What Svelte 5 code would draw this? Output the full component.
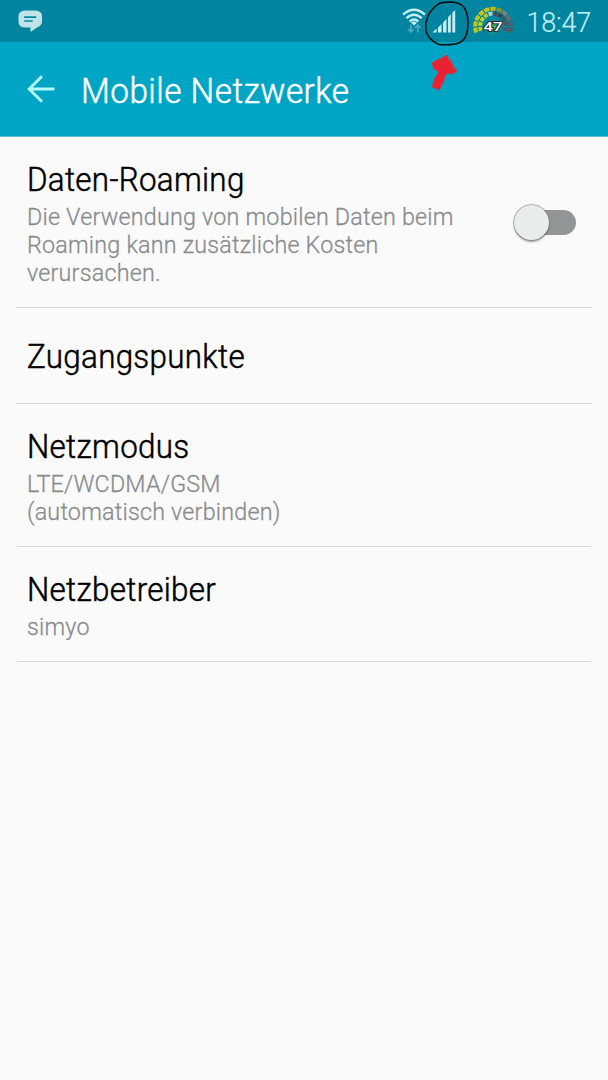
<script>
	/**
	 * @typedef {Object} Setting
	 * @property {string} title
	 * @property {string[]} [summary] - Lines shown below the title
	 * @property {boolean} [toggle] - Whether the row has a switch
	 */

	/** @type {Setting[]} */
	const settings = [
		{
			title: 'Daten-Roaming',
			summary: [
				'Die Verwendung von mobilen Daten beim',
				'Roaming kann zusätzliche Kosten',
				'verursachen.',
			],
			toggle: true,
		},
		{ title: 'Zugangspunkte' },
		{ title: 'Netzmodus', summary: ['LTE/WCDMA/GSM', '(automatisch verbinden)'] },
		{ title: 'Netzbetreiber', summary: ['simyo'] },
	];

	let roaming = $state(false);

	const outerColors = [
		'#b9c81c', '#b9c81c', '#bfc91e', '#c4c31c', '#cbc616', '#c5b918',
		'#8f9324', '#7b7f80', '#6d6970', '#5a5c60', '#55585c',
	];
	const innerColors = [
		'#bfcc1c', '#c3cf1c', '#c8d020', '#c0c82a', '#b9ccd6',
		'#3f4b55', '#36424a', '#46525a', '#515459', '#515a5e',
	];

	/**
	 * Segments of a gauge ring, from left to right
	 * @param {number} radius
	 * @param {string[]} colors
	 */
	function ring(radius, colors) {
		const start = 202;
		const step = -224 / colors.length;
		const point = (deg) => {
			const rad = (deg * Math.PI) / 180;
			return `${(20 + radius * Math.cos(rad)).toFixed(2)} ${(20.5 - radius * Math.sin(rad)).toFixed(2)}`;
		};
		const gap = 64 / radius;
		return colors.map((color, i) => {
			const from = start + step * i - gap / 2;
			const to = start + step * (i + 1) + gap / 2;
			return { color, d: `M${point(from)}A${radius} ${radius} 0 0 1 ${point(to)}` };
		});
	}

	const segments = [...ring(17.8, outerColors), ...ring(12.9, innerColors)];
</script>

<div class="screen">
	<header class="status-bar">
		<svg class="message" width="25" height="23" viewBox="0 0 25 23">
			<path
				d="M8 0.500h8Q24 0.500 24 6v5.500Q24 15.500 19 17.500L12.500 22V17.500H8Q0.500 17.500 0.500 12V6Q0.500 0.500 8 0.500Z"
				fill="#bfe3e9" />
			<path d="M6.200 7.200h12M6.200 11h8.500" stroke="#0787a2" stroke-width="1.700" />
		</svg>

		<div class="indicators">
			<svg class="wifi" width="24" height="26" viewBox="0 0 24 26">
				<g fill="none" stroke="#c5eef3" stroke-width="2.400">
					<path d="M1 6.600Q12 -3.200 23 6.600" />
					<path d="M4.300 10.200Q12 3.200 19.700 10.200" />
					<path d="M7.600 13.500Q12 9.300 16.400 13.500" />
				</g>
				<path d="M9 14.600Q12 12.600 15 14.600L12 17.600Z" fill="#c5eef3" />
				<g fill="none" stroke="#4ba9bc" stroke-width="1.700">
					<path d="M8.800 16.500v7.500M6 21l2.800 3 2.800-3" />
					<path d="M15.800 24.500v-7.500M13 20l2.800-3 2.800 3" />
				</g>
			</svg>

			<div class="signal">
				<svg width="24" height="23" viewBox="0 0 24 23" fill="#c5eef3">
					<path d="M0.500 22.500L4.500 18.500V22.500Z" />
					<path d="M6 22.500V17.500L9.500 14V22.500Z" />
					<path d="M11 22.500V12.500L14.500 9V22.500Z" />
					<path d="M16 22.500V7.200L18.800 4.200V22.500Z" />
					<path d="M20.300 22.500V2.800L23.200 0V22.500Z" />
				</svg>
				<svg class="marker" width="44" height="92" viewBox="0 0 44 92">
					<path
						d="M14.300 2.300Q20 1 26.700 1Q33 1.500 36.700 4Q40 6.500 41.300 10.700Q43 16 43 22.300Q43 29 41.300 34Q40 38 36.700 40.300Q33 42.800 30 43Q21 44.500 13.300 43.300Q8 41 5 37.300Q1 33 0.700 27.300Q0.500 23 1.700 19Q3 13 6.700 9Q10 5 14.300 2.300Z"
						fill="none"
						stroke="#02090b"
						stroke-width="1.500" />
					<path
						d="M7 61.700L22.300 53.800L24 59L26.700 60L27.500 64L32 70L27.300 73L22 72.500L19.800 75.700L19.300 79L14 89.500L6.900 85.700L9.600 77.300L13.300 71.700L11.700 69L10 69.500L7.700 65.500Z"
						fill="#ea2130"
						stroke="#c83c4e"
						stroke-width="0.900"
						stroke-dasharray="1.500 1.100" />
				</svg>
			</div>

			<svg class="gauge" width="41" height="30" viewBox="0 0 41 30">
				<defs>
					<radialGradient id="glow">
						<stop offset="0" stop-color="#6cc62e" />
						<stop offset="1" stop-color="#1a8b82" stop-opacity="0" />
					</radialGradient>
				</defs>
				<circle cx="20" cy="21" r="10" fill="url(#glow)" />
				{#each segments as segment}
					<path d={segment.d} fill="none" stroke={segment.color} stroke-width="4" />
				{/each}
				<text x="20" y="25.200" textLength="19" lengthAdjust="spacingAndGlyphs">47</text>
			</svg>

			<span class="clock">18:47</span>
		</div>
	</header>

	<div class="action-bar">
		<svg width="28" height="28" viewBox="0 0 28 28" fill="none" stroke="#b0fbf2" stroke-width="3">
			<path d="M15 1.200L2.200 14L15 26.800M2.500 14H27.500" />
		</svg>
		<h1>Mobile Netzwerke</h1>
	</div>

	<main>
		{#each settings as setting}
			<section class:single={!setting.summary}>
				<div class="text">
					<h2>{setting.title}</h2>
					{#if setting.summary}
						<p>
							{#each setting.summary as line}
								<span>{line}</span>
							{/each}
						</p>
					{/if}
				</div>
				{#if setting.toggle}
					<button
						class="switch"
						class:on={roaming}
						role="switch"
						aria-checked={roaming}
						aria-label={setting.title}
						onclick={() => (roaming = !roaming)}>
						<span class="thumb"></span>
					</button>
				{/if}
			</section>
		{/each}
	</main>
</div>

<style>
	:global(body) {
		background: #fafafa;
	}

	.screen {
		min-height: 1080px;
		background: #fafafa;
		font-family: Roboto, sans-serif;
	}

	.status-bar {
		display: flex;
		justify-content: space-between;
		box-sizing: border-box;
		height: 42px;
		padding: 0 17px 0 18px;
		background: #00849f;
	}

	.message {
		margin-top: 10px;
	}

	.indicators {
		display: flex;
	}

	.wifi {
		margin: 8px 6px 0 0;
	}

	.signal {
		position: relative;
		width: 24px;
		margin: 10px 17px 0 0;

		.marker {
			position: absolute;
			top: -9px;
			left: -7px;
			z-index: 1;
			overflow: visible;
		}
	}

	.gauge {
		margin: 6px 12px 0 0;
		overflow: visible;

		text {
			font-size: 13px;
			font-weight: 500;
			text-anchor: middle;
			fill: #fff;
			stroke: #293238;
			stroke-width: 2px;
			paint-order: stroke;
		}
	}

	.clock {
		color: #c0edf1;
		font-size: 27px;
		font-weight: 300;
		letter-spacing: -0.2px;
		line-height: 46px;
		-webkit-text-stroke: 0.2px;
	}

	.action-bar {
		display: flex;
		align-items: center;
		gap: 26px;
		box-sizing: border-box;
		height: 95px;
		padding-left: 27px;
		background: #00a5c6;
		border-bottom: 1px solid #5fbfd2;
	}

	/* Slightly condensed Roboto, between light and regular */
	h1,
	h2,
	p {
		font-weight: 300;
		transform: scaleX(0.95);
		transform-origin: left;
		white-space: nowrap;
		-webkit-text-stroke: 0.5px;
	}

	h1 {
		margin: 5px 0 0;
		color: #fff;
		font-size: 35px;
		letter-spacing: 0.53px;
		line-height: 40px;
	}

	section {
		display: flex;
		justify-content: space-between;
		margin: 0 17px;
		padding: 24px 14px 20px 10px;
		border-bottom: 1px solid #d3d5d6;

		&.single {
			padding: 30px 10px 27px;
		}
	}

	h2 {
		margin: 0;
		color: #000;
		font-size: 33px;
		letter-spacing: 0.32px;
		line-height: 38px;
	}

	p {
		margin: 4px 0 0;
		color: #898c8e;
		font-size: 24.5px;
		letter-spacing: 0.24px;
		line-height: 28px;
		-webkit-text-stroke: 0.3px;

		span {
			display: block;
		}
	}

	.switch {
		display: flex;
		align-items: center;
		flex: none;
		width: 60px;
		height: 25px;
		margin: 49px 1px 0 0;
		padding: 0;
		border: 0;
		border-radius: 13px;
		background: #939495;

		.thumb {
			width: 35px;
			height: 35px;
			margin-left: -2px;
			border-radius: 50%;
			background: #e9eceb;
			box-shadow: 0 0 1px 0.5px #777, 0 2px 2px rgb(0 0 0 / 35%);
		}

		&.on .thumb {
			margin-left: 27px;
		}
	}
</style>
